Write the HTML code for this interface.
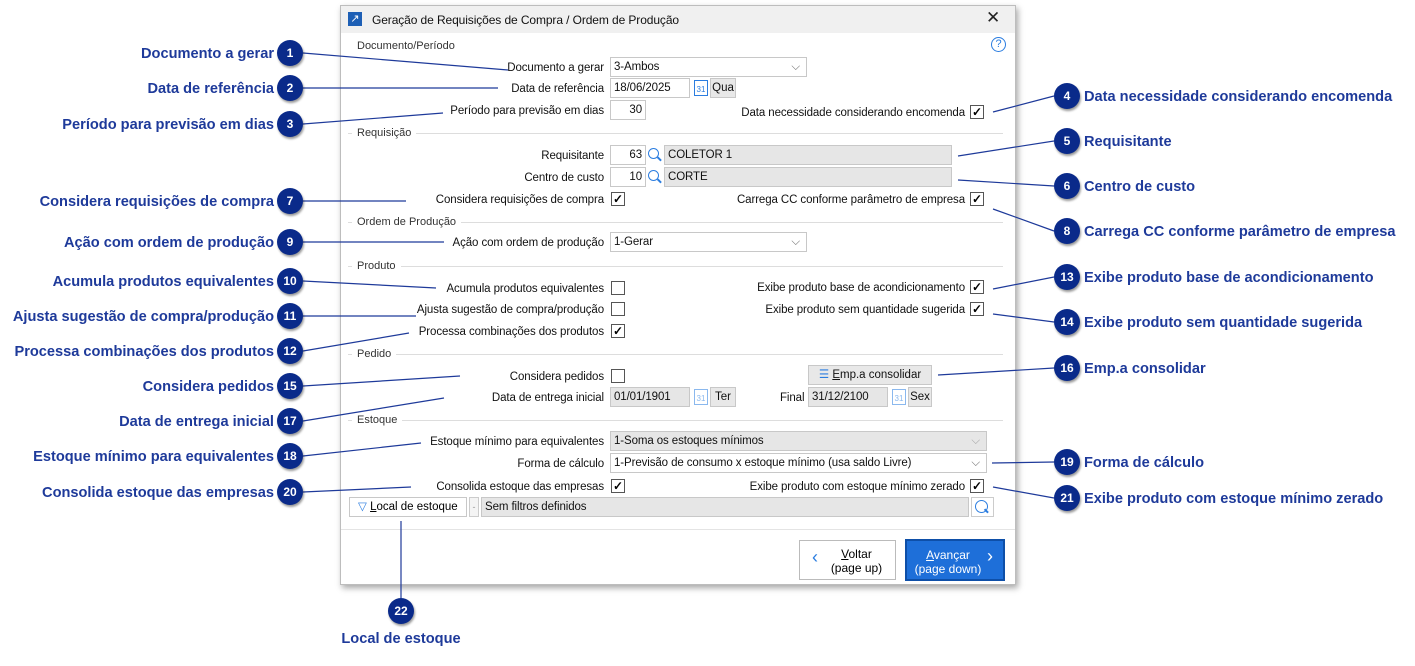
<!DOCTYPE html>
<html><head><meta charset="utf-8"><style>
*{box-sizing:border-box;margin:0;padding:0}
body{width:1415px;height:666px;background:#fff;position:relative;overflow:hidden;font-family:"Liberation Sans",sans-serif}
.a{position:absolute}
#dlg{left:340px;top:5px;width:676px;height:580px;background:#fff;border:1px solid #bdbdbd;box-shadow:2px 3px 6px rgba(0,0,0,.35)}
.t{font-size:11.5px;color:#111;white-space:nowrap;line-height:14px;letter-spacing:-0.1px}
.r{text-align:right}
.f{border:1px solid #c8c8c8;background:#fff;font-size:11.5px;line-height:18px;height:20px;padding:0 3px;white-space:nowrap;color:#111;letter-spacing:-0.1px}
.g{background:#e6e6e6}
.cb{width:14px;height:14px;border:1px solid #555;background:#fff;font-size:12px;line-height:12px;text-align:center;color:#000;font-weight:bold}
.sec{font-size:11px;color:#333;line-height:13px}
.hl{height:1px;background:#ddd}
.btn{border:1px solid #c8c8c8;background:#e8e8e8;font-size:11.5px;line-height:18px;height:20px;text-align:center;color:#111}
.mg{width:11px;height:11px;border:1.5px solid #2b7de0;border-radius:50%}
.mg::after{content:"";position:absolute;left:8px;top:9px;width:5px;height:1.5px;background:#2b7de0;transform:rotate(45deg)}
</style></head><body>
<div id="dlg" class="a"></div>
<div class="a" style="left:341px;top:6px;width:674px;height:27px;background:#f0f0f0"></div>
<div class="a" style="left:348px;top:12px;width:14px;height:14px;background:#1d5fb5;color:#fff;font-size:11px;line-height:14px;text-align:center">↗</div>
<div class="a t" style="left:372px;top:13px;font-size:12px">Geração de Requisições de Compra / Ordem de Produção</div>
<div class="a" style="left:986px;top:8px;font-size:17px;color:#222">✕</div>
<div class="a" style="left:991px;top:37px;width:15px;height:15px;border:1.5px solid #2b7de0;border-radius:50%;color:#2b7de0;font-size:11px;line-height:12px;text-align:center">?</div>

<div class="a sec" style="left:357px;top:40px">Documento/Período</div>
<div class="a hl" style="left:348px;top:133px;width:655px"></div><div class="a sec" style="left:352px;top:127px;background:#fff;padding:0 5px">Requisição</div>
<div class="a hl" style="left:348px;top:222px;width:655px"></div><div class="a sec" style="left:352px;top:216px;background:#fff;padding:0 5px">Ordem de Produção</div>
<div class="a hl" style="left:348px;top:266px;width:655px"></div><div class="a sec" style="left:352px;top:260px;background:#fff;padding:0 5px">Produto</div>
<div class="a hl" style="left:348px;top:354px;width:655px"></div><div class="a sec" style="left:352px;top:348px;background:#fff;padding:0 5px">Pedido</div>
<div class="a hl" style="left:348px;top:420px;width:655px"></div><div class="a sec" style="left:352px;top:414px;background:#fff;padding:0 5px">Estoque</div>

<div class="a t r" style="left:304px;width:300px;top:61px">Documento a gerar</div>
<div class="a t r" style="left:304px;width:300px;top:82px">Data de referência</div>
<div class="a t r" style="left:304px;width:300px;top:104px">Período para previsão em dias</div>
<div class="a t r" style="left:304px;width:300px;top:149px">Requisitante</div>
<div class="a t r" style="left:304px;width:300px;top:171px">Centro de custo</div>
<div class="a t r" style="left:304px;width:300px;top:193px">Considera requisições de compra</div>
<div class="a t r" style="left:304px;width:300px;top:236px">Ação com ordem de produção</div>
<div class="a t r" style="left:304px;width:300px;top:282px">Acumula produtos equivalentes</div>
<div class="a t r" style="left:304px;width:300px;top:303px">Ajusta sugestão de compra/produção</div>
<div class="a t r" style="left:304px;width:300px;top:325px">Processa combinações dos produtos</div>
<div class="a t r" style="left:304px;width:300px;top:370px">Considera pedidos</div>
<div class="a t r" style="left:304px;width:300px;top:391px">Data de entrega inicial</div>
<div class="a t r" style="left:304px;width:300px;top:435px">Estoque mínimo para equivalentes</div>
<div class="a t r" style="left:304px;width:300px;top:457px">Forma de cálculo</div>
<div class="a t r" style="left:304px;width:300px;top:480px">Consolida estoque das empresas</div>
<div class="a t r" style="left:665px;width:300px;top:106px">Data necessidade considerando encomenda</div>
<div class="a t r" style="left:665px;width:300px;top:193px">Carrega CC conforme parâmetro de empresa</div>
<div class="a t r" style="left:665px;width:300px;top:281px">Exibe produto base de acondicionamento</div>
<div class="a t r" style="left:665px;width:300px;top:303px">Exibe produto sem quantidade sugerida</div>
<div class="a t r" style="left:665px;width:300px;top:480px">Exibe produto com estoque mínimo zerado</div>
<div class="a t" style="left:780px;top:391px">Final</div>

<div class="a f" style="left:610px;top:57px;width:197px">3-Ambos<span style="position:absolute;right:6px;color:#777">⌵</span></div>
<div class="a f" style="left:610px;top:78px;width:80px">18/06/2025</div>
<div class="a" style="left:694px;top:80px;width:14px;height:16px;border:1.5px solid #2b7de0;color:#2b7de0;font-size:8px;text-align:center;line-height:18px">31</div>
<div class="a btn" style="left:710px;top:78px;width:26px">Qua</div>
<div class="a f r" style="left:610px;top:100px;width:36px">30</div>
<div class="a cb" style="left:970px;top:105px">✓</div>
<div class="a f r" style="left:610px;top:145px;width:36px">63</div>
<div class="a mg" style="left:648px;top:148px"></div>
<div class="a f g" style="left:664px;top:145px;width:288px">COLETOR 1</div>
<div class="a f r" style="left:610px;top:167px;width:36px">10</div>
<div class="a mg" style="left:648px;top:170px"></div>
<div class="a f g" style="left:664px;top:167px;width:288px">CORTE</div>
<div class="a cb" style="left:611px;top:192px">✓</div>
<div class="a cb" style="left:970px;top:192px">✓</div>
<div class="a f" style="left:610px;top:232px;width:197px">1-Gerar<span style="position:absolute;right:6px;color:#777">⌵</span></div>
<div class="a cb" style="left:611px;top:281px"></div>
<div class="a cb" style="left:970px;top:280px">✓</div>
<div class="a cb" style="left:611px;top:302px"></div>
<div class="a cb" style="left:970px;top:302px">✓</div>
<div class="a cb" style="left:611px;top:324px">✓</div>
<div class="a cb" style="left:611px;top:369px"></div>
<div class="a btn" style="left:808px;top:365px;width:124px"><span style="color:#2b7de0">☰</span> <u>E</u>mp.a consolidar</div>
<div class="a f g" style="left:610px;top:387px;width:80px">01/01/1901</div>
<div class="a" style="left:694px;top:389px;width:14px;height:16px;border:1.5px solid #8ab8ee;color:#8ab8ee;font-size:8px;text-align:center;line-height:18px">31</div>
<div class="a btn" style="left:710px;top:387px;width:26px">Ter</div>
<div class="a f g" style="left:808px;top:387px;width:80px">31/12/2100</div>
<div class="a" style="left:892px;top:389px;width:14px;height:16px;border:1.5px solid #8ab8ee;color:#8ab8ee;font-size:8px;text-align:center;line-height:18px">31</div>
<div class="a btn" style="left:908px;top:387px;width:24px">Sex</div>
<div class="a f g" style="left:610px;top:431px;width:377px">1-Soma os estoques mínimos<span style="position:absolute;right:6px;color:#aaa">⌵</span></div>
<div class="a f" style="left:610px;top:453px;width:377px">1-Previsão de consumo x estoque mínimo (usa saldo Livre)<span style="position:absolute;right:6px;color:#777">⌵</span></div>
<div class="a cb" style="left:611px;top:479px">✓</div>
<div class="a cb" style="left:970px;top:479px">✓</div>
<div class="a" style="left:349px;top:497px;width:118px;height:20px;border:1px solid #c8c8c8;background:#fff;font-size:11.5px;line-height:18px;padding-left:8px"><span style="color:#2b7de0">▽</span> <u>L</u>ocal de estoque</div>
<div class="a" style="left:469px;top:497px;width:10px;height:20px;border:1px solid #ccc;background:#f4f4f4;color:#999;font-size:9px;text-align:center;line-height:18px">-</div>
<div class="a f g" style="left:481px;top:497px;width:488px">Sem filtros definidos</div>
<div class="a" style="left:971px;top:497px;width:23px;height:20px;border:1px solid #ccc;background:#fff"></div>
<div class="a mg" style="left:975px;top:500px;width:13px;height:13px"></div>
<div class="a hl" style="left:341px;top:529px;width:674px;background:#e4e4e4"></div>
<div class="a" style="left:799px;top:540px;width:97px;height:40px;border:1px solid #bbb;background:#fff;font-size:12px;line-height:14px;text-align:center;padding-top:6px;padding-left:18px"><span style="position:absolute;left:12px;top:9px;font-size:18px;color:#2b7de0">‹</span><u>V</u>oltar<br>(page up)</div>
<div class="a" style="left:905px;top:539px;width:100px;height:42px;border:2px solid #0e4fa8;background:#1e6fd9;color:#fff;font-size:12px;line-height:14px;text-align:center;padding-top:7px;padding-right:14px"><span style="position:absolute;right:10px;top:8px;font-size:18px">›</span><u>A</u>vançar<br>(page down)</div>

<svg class="a" style="left:0;top:0" width="1415" height="666">
<g stroke="#1e3a9a" stroke-width="1.2">
<line x1="303" y1="53" x2="508" y2="70"/><line x1="303" y1="88" x2="498" y2="88"/><line x1="303" y1="124" x2="443" y2="113"/>
<line x1="1054" y1="96" x2="993" y2="112"/><line x1="1054" y1="141" x2="958" y2="156"/><line x1="1054" y1="186" x2="958" y2="180"/>
<line x1="303" y1="201" x2="406" y2="201"/><line x1="1054" y1="231" x2="993" y2="209"/><line x1="303" y1="242" x2="444" y2="242"/>
<line x1="303" y1="281" x2="436" y2="288"/><line x1="303" y1="316" x2="416" y2="316"/><line x1="303" y1="351" x2="409" y2="333"/>
<line x1="1054" y1="277" x2="993" y2="289"/><line x1="1054" y1="322" x2="993" y2="314"/>
<line x1="303" y1="386" x2="460" y2="376"/><line x1="303" y1="421" x2="444" y2="398"/><line x1="1054" y1="368" x2="938" y2="375"/>
<line x1="303" y1="456" x2="421" y2="443"/><line x1="1054" y1="462" x2="992" y2="463"/><line x1="303" y1="492" x2="411" y2="487"/>
<line x1="1054" y1="498" x2="993" y2="487"/><line x1="401" y1="598" x2="401" y2="521"/>
</g>
<g fill="#0a2a8a" style="filter:drop-shadow(1px 2px 1px rgba(0,0,0,.4))">
<circle cx="290" cy="53" r="13"/><circle cx="290" cy="88" r="13"/><circle cx="290" cy="124" r="13"/><circle cx="290" cy="201" r="13"/>
<circle cx="290" cy="242" r="13"/><circle cx="290" cy="281" r="13"/><circle cx="290" cy="316" r="13"/><circle cx="290" cy="351" r="13"/>
<circle cx="290" cy="386" r="13"/><circle cx="290" cy="421" r="13"/><circle cx="290" cy="456" r="13"/><circle cx="290" cy="492" r="13"/>
<circle cx="1067" cy="96" r="13"/><circle cx="1067" cy="141" r="13"/><circle cx="1067" cy="186" r="13"/><circle cx="1067" cy="231" r="13"/>
<circle cx="1067" cy="277" r="13"/><circle cx="1067" cy="322" r="13"/><circle cx="1067" cy="368" r="13"/><circle cx="1067" cy="462" r="13"/>
<circle cx="1067" cy="498" r="13"/><circle cx="401" cy="611" r="13"/>
</g>
<g fill="#fff" font-family="Liberation Sans" font-weight="bold" font-size="12" text-anchor="middle">
<text x="290" y="57">1</text><text x="290" y="92">2</text><text x="290" y="128">3</text><text x="290" y="205">7</text>
<text x="290" y="246">9</text><text x="290" y="285">10</text><text x="290" y="320">11</text><text x="290" y="355">12</text>
<text x="290" y="390">15</text><text x="290" y="425">17</text><text x="290" y="460">18</text><text x="290" y="496">20</text>
<text x="1067" y="100">4</text><text x="1067" y="145">5</text><text x="1067" y="190">6</text><text x="1067" y="235">8</text>
<text x="1067" y="281">13</text><text x="1067" y="326">14</text><text x="1067" y="372">16</text><text x="1067" y="466">19</text>
<text x="1067" y="502">21</text><text x="401" y="615">22</text>
</g>
<g fill="#1e3a9a" font-family="Liberation Sans" font-weight="bold" font-size="14.6" text-anchor="end">
<text x="274" y="58">Documento a gerar</text><text x="274" y="93">Data de referência</text><text x="274" y="129">Período para previsão em dias</text>
<text x="274" y="206">Considera requisições de compra</text><text x="274" y="247">Ação com ordem de produção</text>
<text x="274" y="286">Acumula produtos equivalentes</text><text x="274" y="321">Ajusta sugestão de compra/produção</text>
<text x="274" y="356">Processa combinações dos produtos</text><text x="274" y="391">Considera pedidos</text>
<text x="274" y="426">Data de entrega inicial</text><text x="274" y="461">Estoque mínimo para equivalentes</text>
<text x="274" y="497">Consolida estoque das empresas</text>
</g>
<g fill="#1e3a9a" font-family="Liberation Sans" font-weight="bold" font-size="14.6">
<text x="1084" y="101">Data necessidade considerando encomenda</text><text x="1084" y="146">Requisitante</text>
<text x="1084" y="191">Centro de custo</text><text x="1084" y="236">Carrega CC conforme parâmetro de empresa</text>
<text x="1084" y="282">Exibe produto base de acondicionamento</text><text x="1084" y="327">Exibe produto sem quantidade sugerida</text>
<text x="1084" y="373">Emp.a consolidar</text><text x="1084" y="467">Forma de cálculo</text>
<text x="1084" y="503">Exibe produto com estoque mínimo zerado</text>
<text x="401" y="643" text-anchor="middle">Local de estoque</text>
</g>
</svg>
</body></html>
